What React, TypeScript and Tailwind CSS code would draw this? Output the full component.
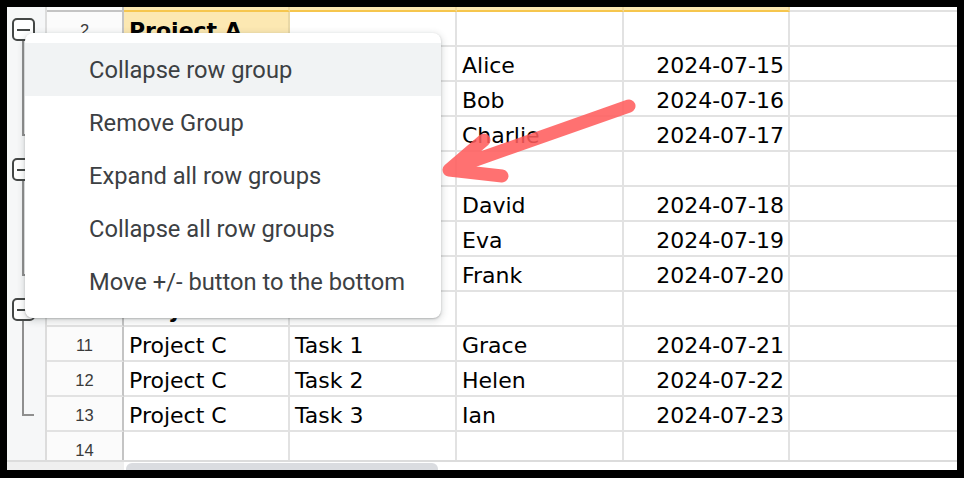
import React from 'react';

type G = 'box' | 'mid' | 'end' | 'none';
interface Row {
  n: number;
  g: G;
  cells: string[];
  bold?: boolean;
  header?: boolean;
  cream?: boolean;
}

const rows: Row[] = [
  { n: 1, g: 'none', cells: ['Project', 'Task', 'Assignee', 'Due Date'], header: true },
  { n: 2, g: 'box', cells: ['Project A', '', '', ''], bold: true, cream: true },
  { n: 3, g: 'mid', cells: ['Project A', 'Task 1', 'Alice', '2024-07-15'] },
  { n: 4, g: 'mid', cells: ['Project A', 'Task 2', 'Bob', '2024-07-16'] },
  { n: 5, g: 'end', cells: ['Project A', 'Task 3', 'Charlie', '2024-07-17'] },
  { n: 6, g: 'box', cells: ['Project B', '', '', ''], bold: true },
  { n: 7, g: 'mid', cells: ['Project B', 'Task 1', 'David', '2024-07-18'] },
  { n: 8, g: 'mid', cells: ['Project B', 'Task 2', 'Eva', '2024-07-19'] },
  { n: 9, g: 'end', cells: ['Project B', 'Task 3', 'Frank', '2024-07-20'] },
  { n: 10, g: 'box', cells: ['Project C', '', '', ''], bold: true },
  { n: 11, g: 'mid', cells: ['Project C', 'Task 1', 'Grace', '2024-07-21'] },
  { n: 12, g: 'mid', cells: ['Project C', 'Task 2', 'Helen', '2024-07-22'] },
  { n: 13, g: 'end', cells: ['Project C', 'Task 3', 'Ian', '2024-07-23'] },
  { n: 14, g: 'none', cells: ['', '', '', ''] },
];

const menuItems = [
  'Collapse row group',
  'Remove Group',
  'Expand all row groups',
  'Collapse all row groups',
  'Move +/- button to the bottom',
];

function Group({ g }: { g: G }) {
  if (g === 'box') {
    return (
      <div className="h-full flex flex-col pt-[6px]">
        <div className="ml-[5px] w-[23px] h-[23px] shrink-0 border-2 border-[#444746] rounded-[5px] bg-white flex items-center justify-center">
          <div className="w-[13px] h-[2px] bg-[#444746]" />
        </div>
        <div className="ml-[15px] w-[2px] flex-1 bg-[#8f8f8f]" />
      </div>
    );
  }
  if (g === 'mid') return <div className="ml-[15px] w-[2px] h-full bg-[#8f8f8f]" />;
  if (g === 'end')
    return <div className="ml-[15px] w-[12px] h-[19px] border-l-2 border-b-2 border-[#8f8f8f]" />;
  return null;
}

const widths = ['w-[166px]', 'w-[167px]', 'w-[167px]', 'w-[166px]'];

function SheetRow({ r }: { r: Row }) {
  return (
    <div className="flex h-[35px]">
      <div className="w-[40px] shrink-0 border-r-2 border-[#dcdcdc] bg-[#f6f7f8]">
        <Group g={r.g} />
      </div>
      <div
        className={`w-[77px] shrink-0 flex items-center justify-center pt-[3px] border-r-2 border-r-[#c4c4c4] border-b-2 bg-[#fbfbfb] text-[16.5px] text-[#3a3a3a] font-['Liberation_Sans',Arial,sans-serif] ${
          r.header ? 'border-b-[#c4c4c4]' : 'border-b-[#e2e2e2]'
        }`}
      >
        {r.n}
      </div>
      {r.cells.map((c, i) => {
        const isDate = i === 3;
        let cls = 'border-[#e2e2e2] bg-white';
        if (r.header) cls = 'bg-[#fce8b2] border-r-[#efd9a0] border-b-[#f6c64e]';
        else if (r.cream && i === 0) cls = 'bg-[#fce8b2] border-r-[#e9d8a6] border-b-[#e2e2e2]';
        return (
          <div
            key={i}
            className={`${widths[i]} shrink-0 flex items-center pt-[5px] overflow-hidden whitespace-nowrap border-r-2 border-b-2 ${cls} ${
              isDate ? 'justify-end pr-[4px]' : 'pl-[5px]'
            } ${r.bold || r.header ? 'font-bold' : ''}`}
          >
            {c}
          </div>
        );
      })}
      <div className="flex-1 border-b-2 border-[#e2e2e2] bg-white" />
    </div>
  );
}

export default function App() {
  return (
    <div className="relative w-[964px] h-[478px] bg-black pt-[7px] pl-[7px] pr-[7px] pb-[8px]">
      <div className="w-full h-full bg-white flex flex-col overflow-hidden">
        <div className="flex-1 overflow-hidden font-['DejaVu_Sans',Verdana,sans-serif] text-[22px] leading-none text-black">
          <div className="-mt-[30px]">
            {rows.map((r) => (
              <SheetRow key={r.n} r={r} />
            ))}
          </div>
        </div>
        <div className="h-[10px] shrink-0 border-t-2 border-[#dcdcdc] flex">
          <div className="w-[117px] bg-[#efefef]" />
          <div className="w-[2px]" />
          <div className="w-[312px] mt-[1px] bg-[#dadce0] rounded-t-[6px]" />
          <div className="flex-1 bg-white" />
        </div>
      </div>

      <div className="absolute left-[25px] top-[33px] w-[416px] h-[285px] bg-white rounded-[8px] shadow-[0_1px_2px_0_rgba(60,64,67,0.3),0_2px_6px_2px_rgba(60,64,67,0.15)] py-[10px] font-['Roboto',sans-serif]">
        {menuItems.map((m, i) => (
          <div
            key={m}
            className={`h-[53px] flex items-center pl-[64px] pt-[2px] text-[23.7px] text-[#3c4043] ${
              i === 0 ? 'bg-[#f1f3f4]' : ''
            }`}
          >
            {m}
          </div>
        ))}
      </div>

      <svg
        className="absolute left-0 top-0 pointer-events-none"
        width="964"
        height="478"
        viewBox="0 0 964 478"
      >
        <path
          d="M629 106 L453 168 M484 140 L449 170 L502 176"
          fill="none"
          stroke="#ff5c5c"
          strokeOpacity="0.87"
          strokeWidth="13"
          strokeLinecap="round"
          strokeLinejoin="round"
        />
      </svg>
    </div>
  );
}
